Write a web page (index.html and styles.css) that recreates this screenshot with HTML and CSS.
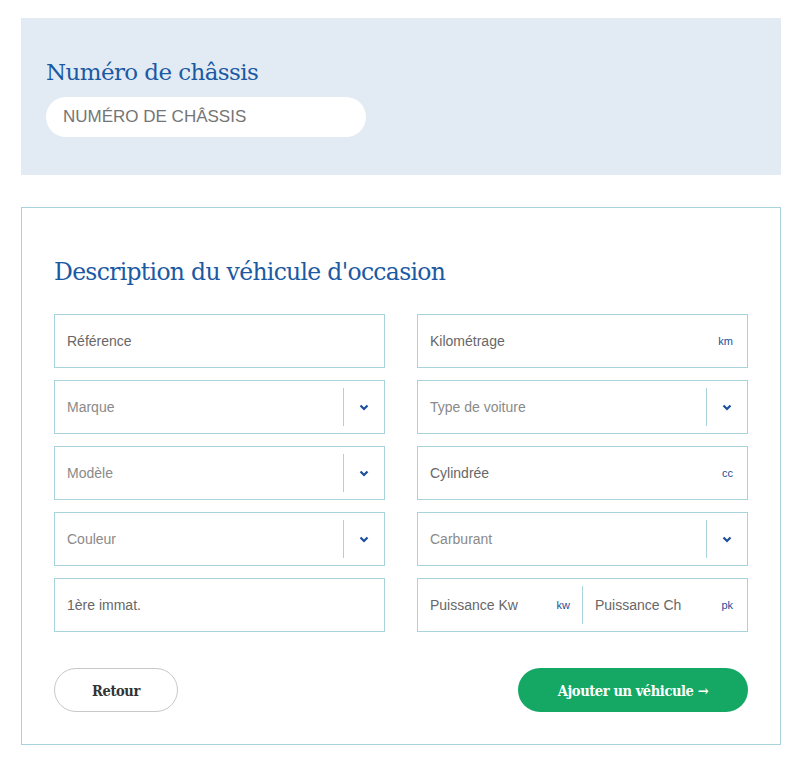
FILE: index.html
```html
<!DOCTYPE html>
<html lang="fr">
<head>
    <meta charset="UTF-8">
    <meta name="viewport" content="width=device-width, initial-scale=1.0">
    <title>Véhicule d'occasion</title>
    <link rel="stylesheet" href="styles.css">
</head>
<body>
    <div class="page">
        <!-- Recherche par châssis -->
        <div class="chassis">
            <h2>Numéro de châssis</h2>
            <input type="text" class="chassis-input" placeholder="NUMÉRO DE CHÂSSIS">
        </div>

        <!-- Description du véhicule -->
        <div class="description">
            <h1>Description du véhicule d'occasion</h1>

            <div class="grid">
                <div class="field">
                    <input type="text" placeholder="Référence">
                </div>
                <div class="field">
                    <input type="text" placeholder="Kilométrage">
                    <span class="unit">km</span>
                </div>

                <div class="field select">
                    <span class="value">Marque</span>
                    <span class="arrow"><svg width="10" height="7" viewBox="0 0 10 7"><path d="M1.5 1.5 L5 5 L8.5 1.5" fill="none" stroke="#1c4f9a" stroke-width="2.2"/></svg></span>
                </div>
                <div class="field select">
                    <span class="value">Type de voiture</span>
                    <span class="arrow"><svg width="10" height="7" viewBox="0 0 10 7"><path d="M1.5 1.5 L5 5 L8.5 1.5" fill="none" stroke="#1c4f9a" stroke-width="2.2"/></svg></span>
                </div>

                <div class="field select">
                    <span class="value">Modèle</span>
                    <span class="arrow"><svg width="10" height="7" viewBox="0 0 10 7"><path d="M1.5 1.5 L5 5 L8.5 1.5" fill="none" stroke="#1c4f9a" stroke-width="2.2"/></svg></span>
                </div>
                <div class="field">
                    <input type="text" placeholder="Cylindrée">
                    <span class="unit">cc</span>
                </div>

                <div class="field select">
                    <span class="value">Couleur</span>
                    <span class="arrow"><svg width="10" height="7" viewBox="0 0 10 7"><path d="M1.5 1.5 L5 5 L8.5 1.5" fill="none" stroke="#1c4f9a" stroke-width="2.2"/></svg></span>
                </div>
                <div class="field select">
                    <span class="value">Carburant</span>
                    <span class="arrow"><svg width="10" height="7" viewBox="0 0 10 7"><path d="M1.5 1.5 L5 5 L8.5 1.5" fill="none" stroke="#1c4f9a" stroke-width="2.2"/></svg></span>
                </div>

                <div class="field">
                    <input type="text" placeholder="1ère immat.">
                </div>
                <div class="field split">
                    <div class="half">
                        <input type="text" placeholder="Puissance Kw">
                        <span class="unit">kw</span>
                    </div>
                    <div class="half">
                        <input type="text" placeholder="Puissance Ch">
                        <span class="unit">pk</span>
                    </div>
                </div>
            </div>

            <div class="actions">
                <button class="btn-back">Retour</button>
                <button class="btn-add">Ajouter un véhicule →</button>
            </div>
        </div>
    </div>
</body>
</html>
```

FILE: styles.css
```css
body {
    margin: 0;
    background: #fff;
    font-family: "Liberation Sans", Arial, sans-serif;
}

.page {
    width: 760px;
    padding: 18px 0 0 21px;
}

.chassis {
    background: #e2ebf3;
    height: 157px;
    padding: 0 25px;
    box-sizing: border-box;
    overflow: hidden;
}

.chassis h2 {
    margin: 40px 0 0 0;
    font-family: "DejaVu Serif", serif;
    font-weight: normal;
    font-size: 23px;
    letter-spacing: -0.6px;
    color: #1b59a3;
    line-height: 28px;
}

.chassis-input {
    display: block;
    margin-top: 11px;
    width: 320px;
    height: 40px;
    border: none;
    border-radius: 20px;
    padding: 0 17px;
    box-sizing: border-box;
    font-family: "Liberation Sans", Arial, sans-serif;
    font-size: 17px;
    outline: none;
}

.chassis-input::placeholder {
    color: #757575;
}

.description {
    margin-top: 32px;
    border: 1px solid #a9d3dc;
    height: 538px;
    box-sizing: border-box;
    padding: 0 32px;
}

.description h1 {
    margin: 48px 0 0 0;
    font-family: "DejaVu Serif", serif;
    font-weight: normal;
    font-size: 23.5px;
    letter-spacing: -0.7px;
    line-height: 32px;
    color: #1b59a3;
}

.grid {
    margin-top: 26px;
    display: grid;
    grid-template-columns: 331px 331px;
    column-gap: 32px;
    row-gap: 12px;
}

.field {
    height: 54px;
    border: 1px solid #a9d3dc;
    box-sizing: border-box;
    display: flex;
    align-items: center;
    background: #fff;
}

.field input {
    flex: 1;
    width: 0;
    min-width: 0;
    height: 100%;
    border: none;
    padding: 0 12px;
    font-family: "Liberation Sans", Arial, sans-serif;
    font-size: 14px;
    outline: none;
    background: transparent;
}

.field input::placeholder {
    color: #676767;
}

.unit {
    font-size: 11px;
    color: #1c4f9a;
    padding-right: 14px;
}

.select .value {
    flex: 1;
    padding: 0 12px;
    font-size: 14px;
    color: #8a8a8a;
}

.select .arrow {
    width: 41px;
    height: 38px;
    box-sizing: border-box;
    border-left: 1px solid #a9d3dc;
    display: flex;
    align-items: center;
    justify-content: center;
}

.split .half {
    flex: 0 0 164px;
    min-width: 0;
    display: flex;
    align-items: center;
    height: 100%;
}

.split .half:first-child {
    border-right: 1px solid #a9d3dc;
    height: 38px;
}

.split .half:first-child .unit {
    padding-right: 12px;
}

.actions {
    margin-top: 36px;
    display: flex;
    justify-content: space-between;
}

.actions button {
    height: 44px;
    border-radius: 22px;
    font-family: "DejaVu Serif Condensed", "DejaVu Serif", serif;
    font-weight: bold;
    font-size: 14.5px;
    letter-spacing: -0.4px;
    cursor: pointer;
}

.btn-back {
    width: 124px;
    background: #fff;
    border: 1px solid #c8c8c8;
    color: #333;
}

.btn-add {
    width: 230px;
    background: #14a864;
    border: none;
    color: #fff;
}
```
